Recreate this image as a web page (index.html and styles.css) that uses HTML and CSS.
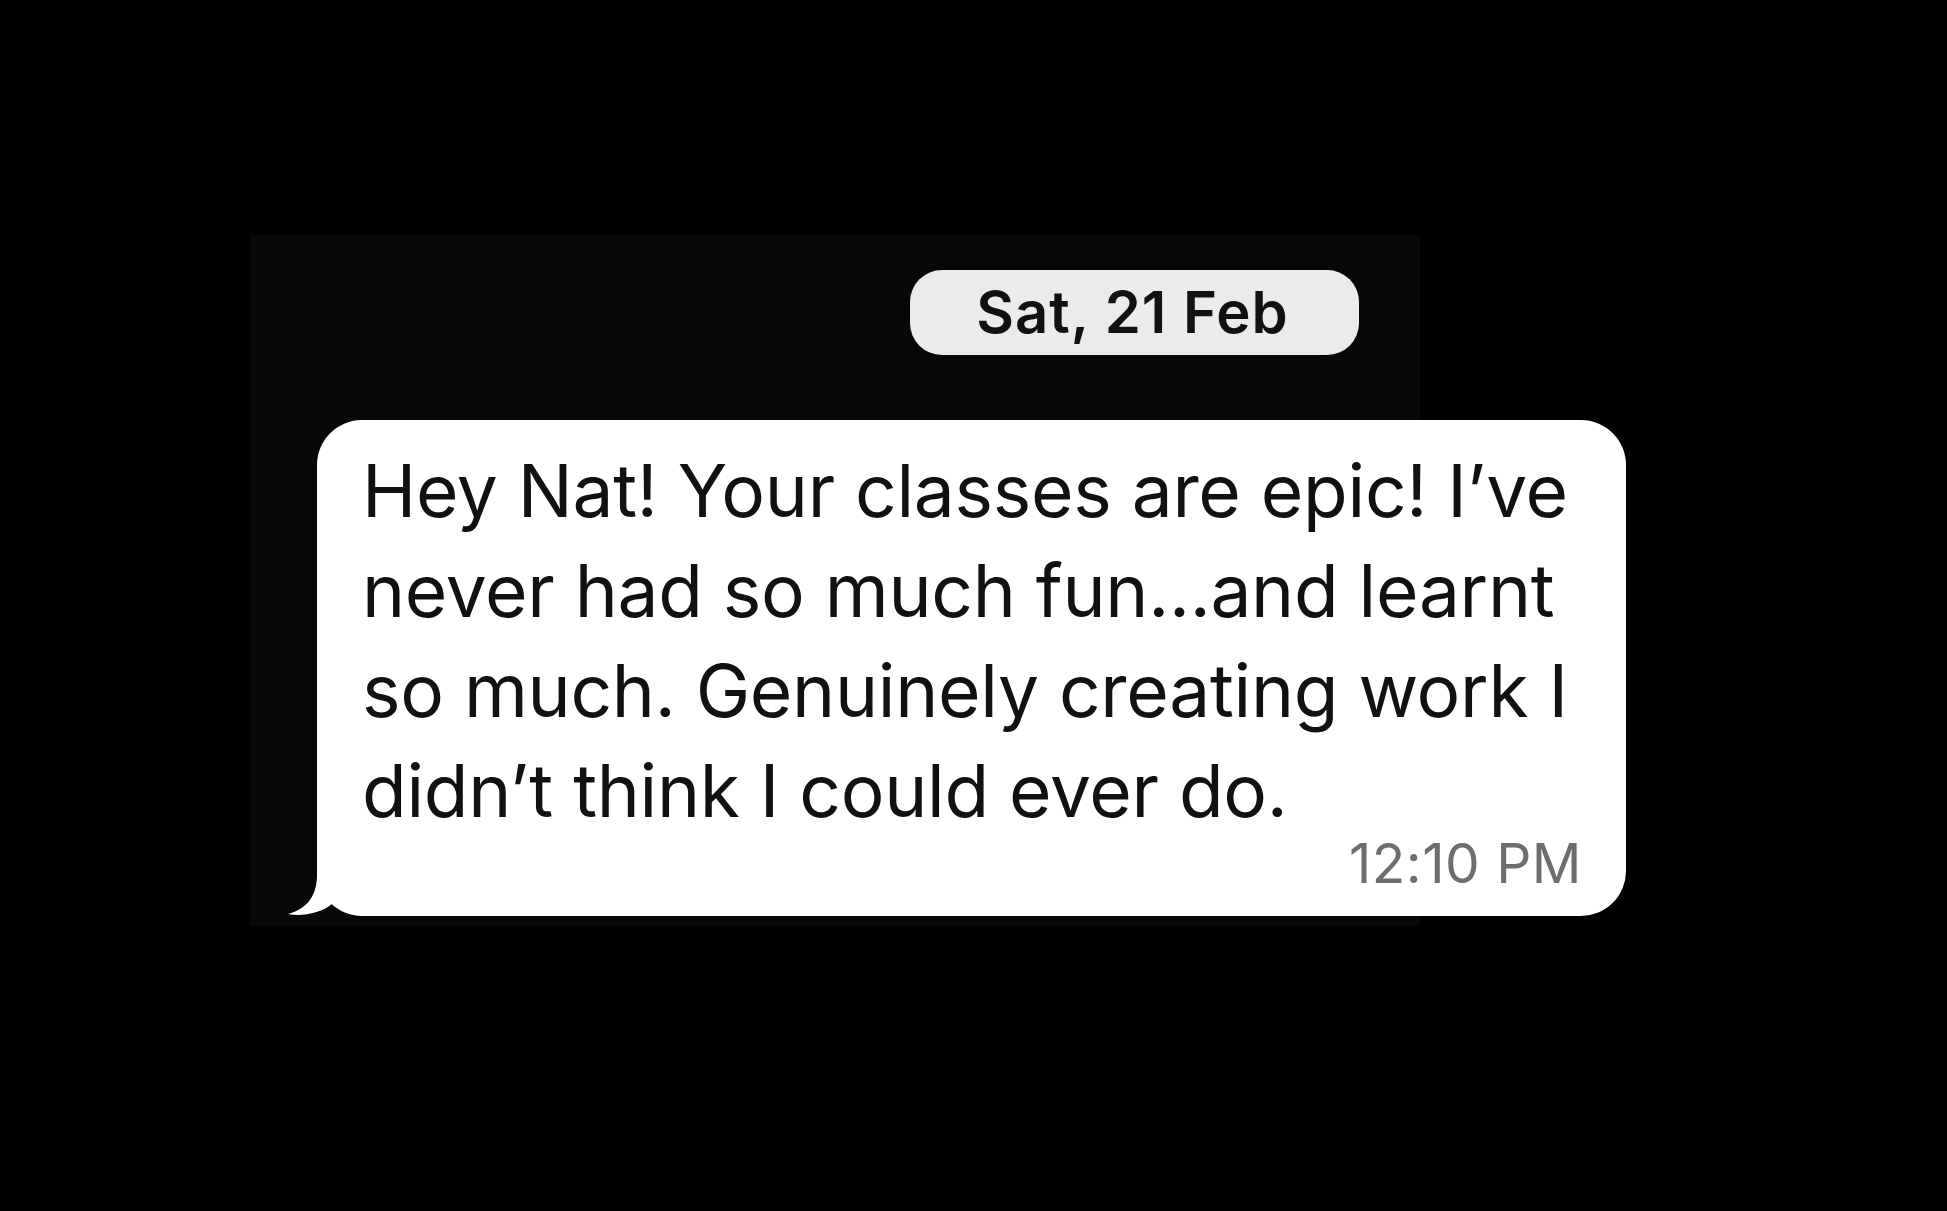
FILE: index.html
```html
<!DOCTYPE html>
<html lang="en">
<head>
<meta charset="utf-8">
<title>Message</title>
<link rel="stylesheet" href="styles.css">
</head>
<body>
<main class="stage">
  <section class="panel">
    <div class="date-pill">Sat, 21 Feb</div>
    <div class="bubble">
      <p class="msg">Hey Nat! Your classes are epic! I’ve<br>never had so much fun...and learnt<br>so much. Genuinely creating work I<br>didn’t think I could ever do.</p>
      <div class="time">12:10 PM</div>
      <svg class="tail" viewBox="0 0 60 60" width="60" height="60" aria-hidden="true">
        <path d="M30 0 L30 20 C29.5 40 20 53 1 58 C14 60.5 34 58 46 47 L46 0 Z" fill="#ffffff"/>
      </svg>
    </div>
  </section>
</main>
</body>
</html>
```
FILE: styles.css
```css
html, body {
  margin: 0;
  padding: 0;
  background: #000;
}
body {
  width: 1947px;
  height: 1211px;
  overflow: hidden;
  font-family: Inter, "Noto Sans", "Liberation Sans", sans-serif;
}
.stage {
  padding-top: 235px;
}
.panel {
  margin-left: 250px;
  width: 1170px;
  padding-top: 35px;
  padding-bottom: 10px;
  background: #080808;
}
.date-pill {
  margin-left: 660px;
  width: 449px;
  height: 85px;
  box-sizing: border-box;
  border-radius: 32px;
  background: #ebebeb;
  color: #111;
  font-size: 58px;
  font-weight: 600;
  line-height: 85px;
  text-align: center;
  padding-right: 4px;
  letter-spacing: 1px;
}
.bubble {
  position: relative;
  margin-top: 65px;
  margin-left: 67px;
  width: 1309px;
  box-sizing: border-box;
  background: #fff;
  border-radius: 45px;
  padding: 21px 44px 23px 45px;
}
.msg {
  margin: 0;
  color: #111;
  font-size: 73px;
  line-height: 100px;
  font-weight: 400;
  letter-spacing: -0.3px;
  white-space: nowrap;
}
.time {
  margin-top: -8px;
  text-align: right;
  color: #6e6e6e;
  font-size: 55px;
  line-height: 60px;
  letter-spacing: 0.5px;
}
.tail {
  position: absolute;
  left: -30px;
  bottom: 0;
  display: block;
}
```
